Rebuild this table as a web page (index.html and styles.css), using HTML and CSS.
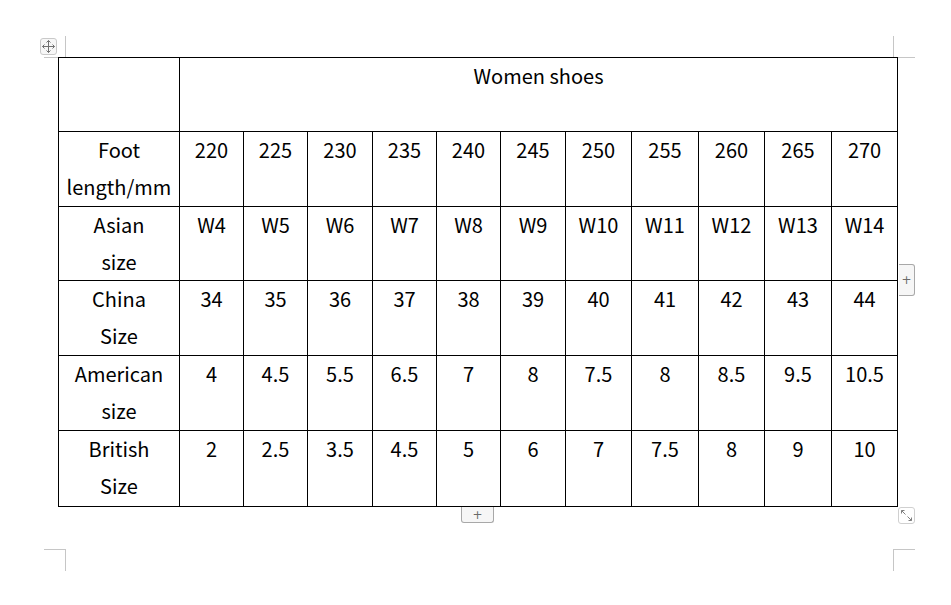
FILE: index.html
```html
<!DOCTYPE html>
<html>
<head>
<meta charset="utf-8">
<link rel="stylesheet" href="styles.css">
</head>
<body>
<div class="page">
  <span class="crop crop-tl"></span>
  <span class="crop crop-tr"></span>
  <span class="crop crop-bl"></span>
  <span class="crop crop-br"></span>
  <div class="move-handle">
    <svg width="13" height="13" viewBox="0 0 13 13"><g fill="none" stroke="#707070" stroke-width="1"><path d="M6.5 0.5v12M0.5 6.5h12"/><path d="M4.5 2.5l2-2 2 2M4.5 10.5l2 2 2-2M2.5 4.5l-2 2 2 2M10.5 4.5l2 2-2 2"/></g></svg>
  </div>
  <div class="table-wrap">
    <table class="sizes">
      <colgroup>
        <col style="width:121px"><col style="width:64px"><col style="width:64px"><col style="width:65px"><col style="width:64px"><col style="width:64px"><col style="width:65px"><col style="width:66px"><col style="width:67px"><col style="width:66px"><col style="width:67px"><col style="width:66px">
      </colgroup>
      <tr class="head r74"><td></td><td colspan="11">Women shoes</td></tr>
      <tr class="r75"><td>Foot<br>length/mm</td><td>220</td><td>225</td><td>230</td><td>235</td><td>240</td><td>245</td><td>250</td><td>255</td><td>260</td><td>265</td><td>270</td></tr>
      <tr class="r74"><td>Asian<br>size</td><td>W4</td><td>W5</td><td>W6</td><td>W7</td><td>W8</td><td>W9</td><td>W10</td><td>W11</td><td>W12</td><td>W13</td><td>W14</td></tr>
      <tr class="r75"><td>China<br>Size</td><td>34</td><td>35</td><td>36</td><td>37</td><td>38</td><td>39</td><td>40</td><td>41</td><td>42</td><td>43</td><td>44</td></tr>
      <tr class="r75"><td>American<br>size</td><td>4</td><td>4.5</td><td>5.5</td><td>6.5</td><td>7</td><td>8</td><td>7.5</td><td>8</td><td>8.5</td><td>9.5</td><td>10.5</td></tr>
      <tr class="r76"><td>British<br>Size</td><td>2</td><td>2.5</td><td>3.5</td><td>4.5</td><td>5</td><td>6</td><td>7</td><td>7.5</td><td>8</td><td>9</td><td>10</td></tr>
    </table>
    <div class="add-btn add-col">+</div>
    <div class="add-btn add-row">+</div>
    <div class="resize-handle">
      <svg width="13" height="13" viewBox="0 0 13 13"><g fill="none" stroke="#808080" stroke-width="1"><path d="M1.5 1.5l4 4M1.5 1.5h3M1.5 1.5v3M11.5 11.5l-4-4M11.5 11.5h-3M11.5 11.5v-3"/></g></svg>
    </div>
  </div>
</div>
</body>
</html>
```
FILE: styles.css
```css
html, body {
  margin: 0;
  padding: 0;
  background: #ffffff;
}
.page {
  position: relative;
  width: 951px;
  height: 605px;
  padding: 57px 0 0 58px;
  box-sizing: border-box;
  font-family: "Noto Sans CJK KR", "Noto Sans", sans-serif;
  color: #000;
}
.crop {
  position: absolute;
  width: 21px;
  height: 21px;
  border-color: #c6c6c6;
  border-style: solid;
  border-width: 0;
}
.crop-tl { left: 44px; top: 36px; border-right-width: 1px; border-bottom-width: 1px; }
.crop-tr { left: 893px; top: 36px; border-left-width: 1px; border-bottom-width: 1px; }
.crop-bl { left: 44px; top: 549px; border-right-width: 1px; border-top-width: 1px; }
.crop-br { left: 893px; top: 549px; border-left-width: 1px; border-top-width: 1px; }
.move-handle {
  position: absolute;
  left: 40px;
  top: 38px;
  width: 17px;
  height: 17px;
  border: 1px solid #c9c9c9;
  border-radius: 3px;
  background: #f7f7f7;
  box-sizing: border-box;
  display: flex;
  align-items: center;
  justify-content: center;
}
.table-wrap {
  position: relative;
  width: 840px;
}
.sizes {
  border-collapse: collapse;
  table-layout: fixed;
  width: 840px;
}
.sizes td {
  border: 1px solid #000;
  padding: 0;
  text-align: center;
  vertical-align: top;
  font-size: 20px;
  line-height: 36.5px;
  white-space: nowrap;
  overflow: hidden;
}
.sizes tr.r74 td { height: 73px; }
.sizes tr.r75 td { height: 74px; }
.sizes tr.r76 td { height: 75px; }
.sizes tr.head td {
  line-height: 36px;
}
.add-btn {
  position: absolute;
  box-sizing: border-box;
  border: 1px solid #a8a8a8;
  border-radius: 3px;
  background: #f6f6f6;
  color: #6a6a6a;
  font-family: "DejaVu Sans", sans-serif;
  font-size: 12px;
  line-height: 1;
  display: flex;
  align-items: center;
  justify-content: center;
}
.add-col {
  left: 841px;
  top: 207px;
  width: 16px;
  height: 32px;
  border-left: none;
  border-radius: 0 3px 3px 0;
}
.add-row {
  left: 403px;
  top: 450px;
  width: 33px;
  height: 16px;
  border-top: none;
  border-radius: 0 0 3px 3px;
}
.resize-handle {
  position: absolute;
  left: 840px;
  top: 450px;
  width: 17px;
  height: 17px;
  border: 1px solid #d0d0d0;
  border-radius: 3px;
  box-sizing: border-box;
  display: flex;
  align-items: center;
  justify-content: center;
}
```
